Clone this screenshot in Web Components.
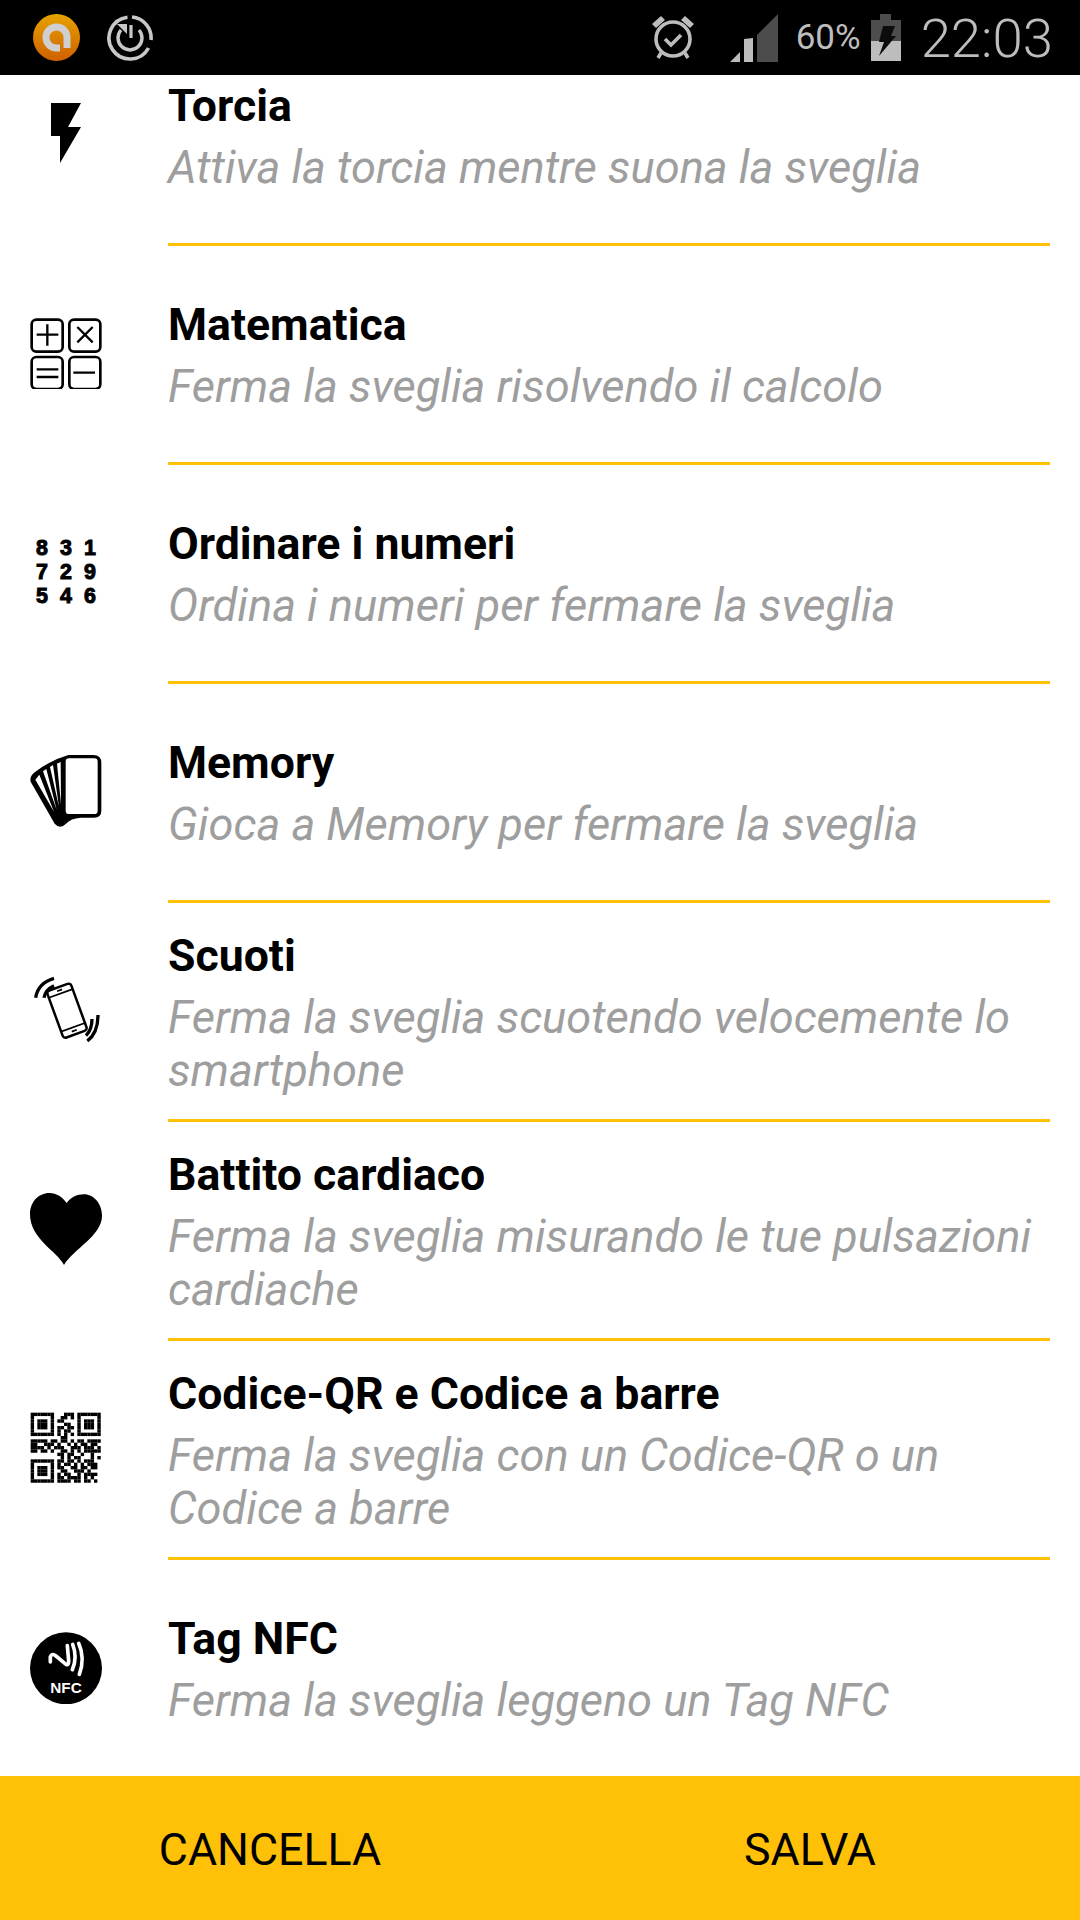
<!DOCTYPE html>
<html>
<head>
<meta charset="utf-8">
<style>
  html, body { margin: 0; padding: 0; background: #fff; }
  body { width: 1080px; height: 1920px; font-family: Roboto, "Liberation Sans", sans-serif; }
  #app { display: flex; flex-direction: column; width: 1080px; height: 1920px; overflow: hidden; }
</style>
</head>
<body>
<div id="app">
  <status-bar></status-bar>
  <option-list>
    <alarm-option icon="flash"><span slot="title">Torcia</span>Attiva la torcia mentre suona la sveglia</alarm-option>
    <alarm-option icon="math"><span slot="title">Matematica</span>Ferma la sveglia risolvendo il calcolo</alarm-option>
    <alarm-option icon="numbers"><span slot="title">Ordinare i numeri</span>Ordina i numeri per fermare la sveglia</alarm-option>
    <alarm-option icon="memory"><span slot="title">Memory</span>Gioca a Memory per fermare la sveglia</alarm-option>
    <alarm-option icon="shake"><span slot="title">Scuoti</span>Ferma la sveglia scuotendo velocemente lo smartphone</alarm-option>
    <alarm-option icon="heart"><span slot="title">Battito cardiaco</span>Ferma la sveglia misurando le tue pulsazioni cardiache</alarm-option>
    <alarm-option icon="qr"><span slot="title">Codice-QR e Codice a barre</span>Ferma la sveglia con un Codice-QR o un Codice a barre</alarm-option>
    <alarm-option icon="nfc" last><span slot="title">Tag NFC</span>Ferma la sveglia leggeno un Tag NFC</alarm-option>
  </option-list>
  <action-bar>
    <action-button>CANCELLA</action-button>
    <action-button>SALVA</action-button>
  </action-bar>
</div>

<script>
const QR_ROWS = [
  '111111100011101111111',
  '100000100110101000001',
  '101110101100001011101',
  '101110100011001011101',
  '101110101101101011101',
  '100000101011001000001',
  '111111101010101111111',
  '000000000110000000000',
  '111110110110101101111',
  '110011101001010110110',
  '111101011100111011101',
  '110110100110101011111',
  '000000001101100100100',
  '000000000101011000101',
  '111111101101101011100',
  '100000101011010101110',
  '101110101100110110110',
  '101110100110011101000',
  '101110101011001011110',
  '100000101101111010100',
  '111111101111011011010'
];

function qrCells() {
  let out = '';
  QR_ROWS.forEach((row, y) => {
    for (let x = 0; x < 21; x++) {
      if (row[x] === '1') out += `<rect x="${x}" y="${y}" width="1.02" height="1.02"/>`;
    }
  });
  return out;
}

const ICONS = {
  flash: `<svg viewBox="0 0 72 72"><path d="M21 5H51L38 29H51L30 65V38H21Z"/></svg>`,
  math: `<svg viewBox="60 50 216 216" fill="none" stroke="#000" stroke-width="8">
    <rect x="65" y="58" width="93" height="96" rx="14"/><rect x="178" y="58" width="93" height="96" rx="14"/>
    <rect x="65" y="170" width="93" height="96" rx="14"/><rect x="178" y="170" width="93" height="96" rx="14"/>
    <path d="M80 103H145M112 72V136M202 80L248 126M248 80L202 126M80 207H145M80 230H145M190 217H255" stroke-width="7"/></svg>`,
  memory: `<svg viewBox="60 48 216 216">
    <path d="M62 128Q58 112 74 100Q120 64 175 48H250Q274 48 274 72V215Q274 236 252 236H212Q182 238 168 254Q150 272 134 254Z"/>
    <g fill="#fff"><rect x="167" y="58" width="96" height="167" rx="10"/>
    <path d="M76 122L88 107L132 218ZM99 97L109 90L140 212ZM120 84L129 78L147 204ZM141 74L152 69L153 196Z"/></g></svg>`,
  shake: `<svg viewBox="60 45 216 216" fill="none" stroke="#000">
    <g transform="rotate(-20 171 155)"><rect x="133" y="80" width="76" height="150" rx="9" stroke-width="7.5"/>
    <path d="M133 100H209M133 208H209" stroke-width="5"/><path d="M163 90H179M163 219H179" stroke-width="5"/></g>
    <path d="M77 116Q84 72 132 58M102 116Q106 92 132 80M264 168Q264 222 232 246M246 180Q246 212 228 230" stroke-width="10"/></svg>`,
  heart: `<svg viewBox="60 42 216 216"><path d="M162 258C140 215 60 180 60 105C60 70 85 42 118 42C140 42 158 55 170 72C182 55 200 46 222 46C252 46 276 75 276 110C276 170 190 210 162 258Z"/></svg>`,
  qr: `<svg viewBox="-0.2 -0.2 21.6 21.6">${qrCells()}</svg>`,
  nfc: `<svg viewBox="60 63 216 216"><circle cx="168" cy="172" r="108"/>
    <path d="M121 153V137Q126 125 138 135L168 160Q176 164 176 150L172 104M188 100Q203 138 187 176M206 97Q226 142 208 190" fill="none" stroke="#fff" stroke-width="11" stroke-linecap="round" stroke-linejoin="round"/>
    <text x="168" y="245" text-anchor="middle" font-family="Liberation Sans" font-weight="700" font-size="46" fill="#fff">NFC</text></svg>`
};

class StatusBar extends HTMLElement {
  constructor() {
    super();
    this.attachShadow({ mode: 'open' });
  }
  connectedCallback() {
    this.shadowRoot.innerHTML = `
      <style>
        :host { display: flex; align-items: center; flex: none; height: 75px; background: #000; color: #bdbdbd; font-family: Roboto, sans-serif; }
        svg { display: block; flex: none; }
        .left { display: flex; align-items: center; gap: 27px; margin-left: 33px; flex: 1; }
        .pct { font-size: 35px; margin: 0 10px 0 18px; }
        .time { font-size: 54.5px; font-weight: 300; margin: 0 27px 0 20px; }
      </style>
      <div class="left">
        <svg width="47" height="47" viewBox="0 0 47 47">
          <defs><linearGradient id="o" x1="0" y1="0" x2="0" y2="1"><stop offset="0" stop-color="#e5a300"/><stop offset="1" stop-color="#cf6000"/></linearGradient></defs>
          <circle cx="23.5" cy="23.5" r="23.5" fill="url(#o)"/>
          <path d="M34 34V23.5A10.5 10.5 0 1 0 23.5 34H27" fill="none" stroke="#cfcfcf" stroke-width="7"/>
        </svg>
        <svg width="46" height="46" viewBox="0 0 46 46" fill="none" stroke="#c8c8c8">
          <path d="M25 2A21 21 0 0 1 44 25M41.5 33A21 21 0 1 1 20.5 2.2" stroke-width="3.6"/>
          <path d="M14 15A12 12 0 1 0 32 15" stroke-width="3.4"/>
          <path d="M24 10V23" stroke-width="3.2"/>
          <path d="M10 9H20V19Z" fill="#c8c8c8" stroke="none"/>
        </svg>
      </div>
      <svg width="46" height="50" viewBox="0 0 46 50" fill="none" stroke="#bdbdbd" style="margin-right:34px">
        <circle cx="23" cy="26" r="17" stroke-width="3.6"/>
        <path d="M15 26L21 32L31 22" stroke-width="3.6"/>
        <path d="M2 11L11 3L15 7L6 15ZM44 11L35 3L31 7L40 15Z" fill="#bdbdbd" stroke="none"/>
        <path d="M11 40L8 45M35 40L38 45" stroke-width="3.6"/>
      </svg>
      <svg width="48" height="48" viewBox="0 0 48 48">
        <path d="M0 48L10 38V48Z M14 48V25L23 24V48Z" fill="#bdbdbd"/>
        <path d="M27 48V21L48 0V48Z" fill="#4c4c4c"/>
      </svg>
      <span class="pct">60%</span>
      <svg width="30" height="47" viewBox="0 0 30 47">
        <rect x="9" y="0" width="11" height="6" fill="#4d4d4d"/>
        <rect x="0" y="6" width="30" height="21" fill="#4d4d4d"/>
        <rect x="0" y="27" width="30" height="20" fill="#bdbdbd"/>
        <path d="M12 12H24L20 22H25L8 42L13 28H8Z" fill="#0c0c0c"/>
      </svg>
      <span class="time">22:03</span>`;
  }
}

class OptionIcon extends HTMLElement {
  constructor() {
    super();
    this.attachShadow({ mode: 'open' });
  }
  connectedCallback() {
    const name = this.getAttribute('name');
    let body = ICONS[name] || '';
    if (name === 'numbers') {
      body = `<div class="digits">${'831729546'.split('').map(d => `<span>${d}</span>`).join('')}</div>`;
    }
    this.shadowRoot.innerHTML = `
      <style>
        :host { display: block; flex: none; width: 72px; height: 72px; fill: #000; }
        svg { display: block; width: 72px; height: 72px; }
        .digits { display: grid; grid-template-columns: repeat(3, 24px); grid-auto-rows: 24px; font: 700 21.4px/24px "Liberation Sans", sans-serif; -webkit-text-stroke: 1px #000; color: #000; text-align: center; }
      </style>
      ${body}`;
  }
}

class AlarmOption extends HTMLElement {
  constructor() {
    super();
    this.attachShadow({ mode: 'open' });
  }
  connectedCallback() {
    const last = this.hasAttribute('last');
    this.shadowRoot.innerHTML = `
      <style>
        :host { display: flex; flex: none; height: ${last ? 216 : 219}px; box-sizing: border-box; padding-right: 30px; font-family: Roboto, sans-serif; }
        .icon { flex: none; width: 168px; padding: 0 0 ${last ? 1 : 5}px 30px; box-sizing: border-box; display: flex; align-items: center; }
        .text { flex: 1; display: flex; flex-direction: column; justify-content: center; padding-top: 4px; box-sizing: border-box; border-bottom: ${last ? 'none' : '3px solid #ffc107'}; }
        .title { font-size: 44.6px; line-height: 53px; font-weight: 700; color: #000; margin-bottom: 8px; }
        .desc { font-size: 45.2px; line-height: 53px; font-style: italic; color: #9e9e9e; }
      </style>
      <div class="icon"><option-icon name="${this.getAttribute('icon')}"></option-icon></div>
      <div class="text">
        <div class="title"><slot name="title"></slot></div>
        <div class="desc"><slot></slot></div>
      </div>`;
  }
}

class OptionList extends HTMLElement {
  constructor() {
    super();
    this.attachShadow({ mode: 'open' });
    this.shadowRoot.innerHTML = `
      <style>
        :host { display: flex; flex-direction: column; justify-content: flex-end; flex: 1; min-height: 0; overflow: hidden; background: #fff; }
      </style>
      <slot></slot>`;
  }
}

class ActionBar extends HTMLElement {
  constructor() {
    super();
    this.attachShadow({ mode: 'open' });
    this.shadowRoot.innerHTML = `
      <style>
        :host { display: grid; grid-template-columns: 1fr 1fr; flex: none; height: 144px; background: #ffc107; }
      </style>
      <slot></slot>`;
  }
}

class ActionButton extends HTMLElement {
  constructor() {
    super();
    this.attachShadow({ mode: 'open' });
    this.shadowRoot.innerHTML = `
      <style>
        :host { display: flex; align-items: center; justify-content: center; padding-top: 3px; font: 400 44.7px Roboto, sans-serif; color: #000; }
      </style>
      <slot></slot>`;
  }
}

customElements.define('status-bar', StatusBar);
customElements.define('option-icon', OptionIcon);
customElements.define('alarm-option', AlarmOption);
customElements.define('option-list', OptionList);
customElements.define('action-bar', ActionBar);
customElements.define('action-button', ActionButton);
</script>
</body>
</html>
